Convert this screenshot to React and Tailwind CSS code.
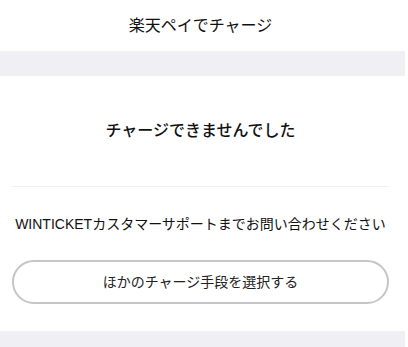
import React from 'react';

export default function App() {
  return (
    <div
      className="w-[405px] bg-white text-[#111]"
      style={{ fontFamily: '"Liberation Sans", "Noto Sans CJK JP", sans-serif' }}
    >
      {/* header */}
      <header className="h-[51px] pl-3 pr-4 flex items-center justify-center">
        <h1 className="text-[16px] leading-6 pt-[1px]">楽天ペイでチャージ</h1>
      </header>

      <div className="h-[25px] bg-[#efeff4]" />

      <section className="pl-3 pr-4">
        <div className="h-[110px] flex items-center justify-center">
          <h2 className="text-[16px] leading-6 font-medium">チャージできませんでした</h2>
        </div>
        <div className="border-t border-[#efeff4]" />
        <p className="pt-[27px] text-[14px] leading-5 text-center whitespace-nowrap">
          WINTICKETカスタマーサポートまでお問い合わせください
        </p>
        <button className="mt-[26px] mb-[27px] w-full h-[44px] rounded-full border-2 border-[#c4c4c9] text-[14px] text-[#222] flex items-center justify-center">
          ほかのチャージ手段を選択する
        </button>
      </section>

      <div className="h-[16px] bg-[#efeff4]" />
    </div>
  );
}
